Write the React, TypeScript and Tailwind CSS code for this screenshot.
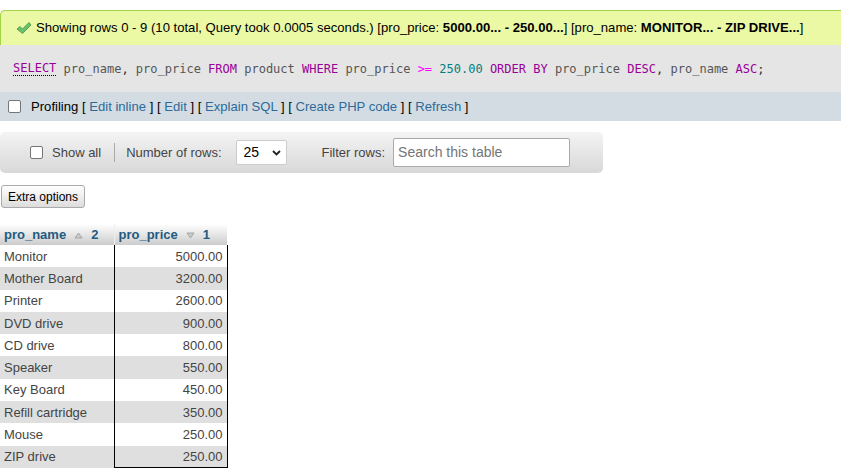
import React from 'react';

const rows = [
  ['Monitor', '5000.00'],
  ['Mother Board', '3200.00'],
  ['Printer', '2600.00'],
  ['DVD drive', '900.00'],
  ['CD drive', '800.00'],
  ['Speaker', '550.00'],
  ['Key Board', '450.00'],
  ['Refill cartridge', '350.00'],
  ['Mouse', '250.00'],
  ['ZIP drive', '250.00'],
];

function Check() {
  return (
    <svg width="16" height="14" viewBox="0 0 16 14" className="mr-[4px] shrink-0">
      <path d="M1 8 L4 5.5 L6.5 8 L13 1.5 L15 4 L6.5 12.5 Z" fill="#6cc26c" stroke="#3f8f3f" strokeWidth="0.8" />
    </svg>
  );
}

function SortIcon({ up }: { up: boolean }) {
  return (
    <svg width="9" height="7" viewBox="0 0 9 7" className="inline-block ml-[8px] mr-[8px]">
      {up ? (
        <path d="M1 6 L4.5 1 L8 6 Z" fill="#ccc" stroke="#999" strokeWidth="0.8" />
      ) : (
        <path d="M1 1 L4.5 6 L8 1 Z" fill="#ccc" stroke="#999" strokeWidth="0.8" />
      )}
    </svg>
  );
}

const kw = 'text-[#990099]';
const id = 'text-[#555]';

export default function App() {
  return (
    <div className="w-[841px] h-[476px] overflow-hidden bg-white text-[#444] font-['Liberation_Sans',Arial,sans-serif] text-[13px]">
      <div className="h-[10px]" />
      {/* success message */}
      <div className="h-[35px] flex items-center pl-[15px] bg-[#ebf8a4] border-t border-l border-[#a2d246] rounded-tl-[5px] text-black text-[13.1px] whitespace-nowrap">
        <Check />
        <span>
          Showing rows 0 - 9 (10 total, Query took 0.0005 seconds.) [pro_price: <b>5000.00... - 250.00...</b>] [pro_name: <b>MONITOR... - ZIP DRIVE...</b>]
        </span>
      </div>
      {/* sql */}
      <div className="h-[47px] flex items-center pl-[13px] bg-[#e5e5e5] font-['DejaVu_Sans_Mono',monospace] text-[12px] whitespace-pre">
        <span className={`${kw} border-b border-dotted border-black leading-[13px]`}>SELECT</span>
        <span className={id}> pro_name</span><span className="text-[#333]">, </span>
        <span className={id}>pro_price </span>
        <span className={kw}>FROM </span>
        <span className={id}>product </span>
        <span className={kw}>WHERE </span>
        <span className={id}>pro_price </span>
        <span className="text-[#ff00ff]">&gt;= </span>
        <span className="text-[#008080]">250.00 </span>
        <span className={kw}>ORDER BY </span>
        <span className={id}>pro_price </span>
        <span className={kw}>DESC</span><span className="text-[#333]">, </span>
        <span className={id}>pro_name </span>
        <span className={kw}>ASC</span><span className="text-[#333]">;</span>
      </div>
      {/* profiling */}
      <div className="h-[29px] flex items-center pl-[8px] bg-[#d3dce3] text-black text-[13.1px] whitespace-nowrap">
        <span className="w-[13px] h-[13px] border border-[#767676] rounded-[2px] bg-white mr-[10px]" />
        <span>
          Profiling [ <span className="text-[#2d6a99]">Edit inline</span> ] [ <span className="text-[#2d6a99]">Edit</span> ] [{' '}
          <span className="text-[#2d6a99]">Explain SQL</span> ] [ <span className="text-[#2d6a99]">Create PHP code</span> ] [{' '}
          <span className="text-[#2d6a99]">Refresh</span> ]
        </span>
      </div>
      <div className="h-[11px]" />
      {/* navigation toolbar */}
      <div className="w-[603px] h-[41px] flex items-center rounded-[5px] bg-gradient-to-b from-[#f4f4f4] to-[#d8d8d8] whitespace-nowrap">
        <span className="ml-[30px] w-[13px] h-[13px] border border-[#767676] rounded-[2px] bg-white" />
        <span className="ml-[9px]">Show all</span>
        <span className="ml-[13px] w-px h-[19px] bg-[#aaa]" />
        <span className="ml-[11px]">Number of rows:</span>
        <div className="ml-[14px] w-[51px] h-[25px] bg-white border border-[#ccc] rounded-[2px] flex items-center pl-[7px] text-black">
          <span className="text-[14px]">25</span>
          <svg width="9" height="6" viewBox="0 0 9 6" className="ml-[13px]">
            <path d="M1 1 L4.5 4.5 L8 1" fill="none" stroke="#222" strokeWidth="1.8" />
          </svg>
        </div>
        <span className="ml-[35px]">Filter rows:</span>
        <div className="ml-[8px] w-[177px] h-[29px] bg-white border border-[#aaa] rounded-[2px] flex items-center pl-[4px] text-[#757575] text-[14px]">
          Search this table
        </div>
      </div>
      <div className="h-[12px]" />
      <div className="ml-[1px] w-[84px] h-[23px] flex items-center justify-center border border-[#aaa] rounded-[3px] bg-gradient-to-b from-white to-[#dddddd] text-[12px] text-black">
        Extra options
      </div>
      <div className="h-[16px]" />
      {/* result table */}
      <table className="border-collapse leading-none">
        <thead>
          <tr className="h-[21px]">
            <th className="w-[114px] text-left font-bold text-[#235a81] pl-[4px] bg-gradient-to-b from-white to-[#cccccc] whitespace-nowrap">
              pro_name<SortIcon up />2
            </th>
            <th className="w-[113px] text-left font-bold text-[#235a81] pl-[4px] bg-gradient-to-b from-white to-[#cccccc] border-l border-[#eee] whitespace-nowrap">
              pro_price<SortIcon up={false} />1
            </th>
          </tr>
        </thead>
        <tbody>
          {rows.map(([name, price], i) => (
            <tr key={name} className={`h-[22.3px] ${i % 2 === 1 ? 'bg-[#dfdfdf]' : 'bg-white'}`}>
              <td className="pl-[4px] whitespace-nowrap">{name}</td>
              <td className={`text-right pr-[4px] border-l border-r border-black ${i === rows.length - 1 ? 'border-b' : ''}`}>
                {price}
              </td>
            </tr>
          ))}
        </tbody>
      </table>
    </div>
  );
}
